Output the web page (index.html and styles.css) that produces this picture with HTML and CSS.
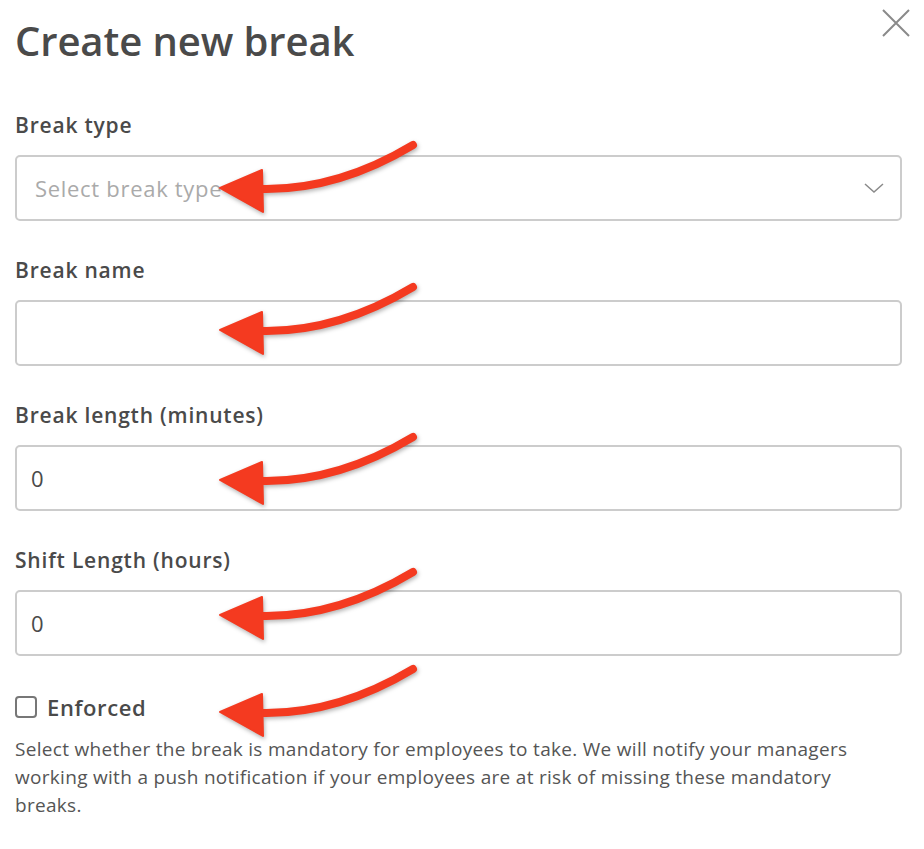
FILE: index.html
```html
<!DOCTYPE html>
<html lang="en">
<head>
  <meta charset="UTF-8" />
  <meta name="viewport" content="width=device-width, initial-scale=1" />
  <title>Create new break</title>
  <link rel="stylesheet" href="styles.css">
</head>
<body>

  <div class="modal">
    <div class="modal-header">
      <h1>Create new break</h1>
      <button class="close-btn" type="button" aria-label="Close">
        <svg width="28" height="28" viewBox="0 0 28 28">
          <path d="M1 1 L27 27 M27 1 L1 27" stroke="#8a8a8a" stroke-width="2" fill="none" />
        </svg>
      </button>
    </div>

    <form class="break-form">
      <div class="field">
        <label class="field-label">Break type</label>
        <div class="select-box">
          <span class="placeholder">Select break type</span>
          <svg width="20" height="10" viewBox="0 0 20 10">
            <path d="M1 1 L10 9 L19 1" stroke="#8a8a8a" stroke-width="1.5" fill="none" />
          </svg>
        </div>
      </div>

      <div class="field">
        <label class="field-label" for="breakName">Break name</label>
        <input class="text-input" id="breakName" type="text" value="" />
      </div>

      <div class="field">
        <label class="field-label" for="breakLength">Break length (minutes)</label>
        <input class="text-input" id="breakLength" type="text" value="0" />
      </div>

      <div class="field">
        <label class="field-label" for="shiftLength">Shift Length (hours)</label>
        <input class="text-input" id="shiftLength" type="text" value="0" />
      </div>

      <label class="check-row">
        <input type="checkbox" class="checkbox" />
        <span>Enforced</span>
      </label>
      <p class="help-text">Select whether the break is mandatory for employees to take. We will notify your managers working with a push notification if your employees are at risk of missing these mandatory breaks.</p>
    </form>
  </div>

  <!-- annotation arrows drawn over the form -->
  <svg class="arrows" width="924" height="849" viewBox="0 0 924 849">
    <defs>
      <g id="arrow">
        <path d="M197 6 Q122 51 47 50" stroke="#f43a20" stroke-width="8" stroke-linecap="round" fill="none" />
        <path d="M4 49 L46 31 L47 73 Z" fill="#f43a20" stroke="#f43a20" stroke-width="2" stroke-linejoin="round" />
      </g>
    </defs>
    <use href="#arrow" x="216" y="139" />
    <use href="#arrow" x="216" y="281" />
    <use href="#arrow" x="216" y="431" />
    <use href="#arrow" x="216" y="566" />
    <use href="#arrow" x="216" y="663" />
  </svg>

</body>
</html>
```

FILE: styles.css
```css
html, body {
  margin: 0;
  padding: 0;
  background: #fff;
  font-family: 'Open Sans', 'Lato', sans-serif;
  color: #4a4a4a;
}

.modal {
  position: relative;
  width: 924px;
}

.modal-header {
  display: flex;
  justify-content: space-between;
  align-items: flex-start;
  padding: 9px 14px 0 15px;
}

.modal-header h1 {
  margin: 8px 0 0 0;
  font-size: 40px;
  line-height: 48px;
  font-weight: 600;
  letter-spacing: -0.1px;
  color: #4a4a4a;
}

.close-btn {
  border: none;
  background: none;
  padding: 0;
  width: 28px;
  height: 28px;
  cursor: pointer;
}

.close-btn svg {
  display: block;
}

.break-form {
  display: flex;
  flex-direction: column;
  padding: 48px 22px 0 15px;
}

.field {
  display: flex;
  flex-direction: column;
  gap: 18px;
  margin-bottom: 37px;
}

.field-label {
  font-size: 21px;
  line-height: 24px;
  font-weight: 600;
  letter-spacing: 0.8px;
}

/* Select finto */
.select-box {
  display: flex;
  align-items: center;
  justify-content: space-between;
  height: 66px;
  box-sizing: border-box;
  border: 2px solid #cccccc;
  border-radius: 5px;
  padding: 0 16px 0 18px;
  cursor: pointer;
}

.placeholder {
  font-size: 22px;
  letter-spacing: 0.7px;
  color: #aaaaaa;
}

.text-input {
  height: 66px;
  box-sizing: border-box;
  border: 2px solid #cccccc;
  border-radius: 5px;
  padding: 0 14px;
  font-family: inherit;
  font-size: 22px;
  color: #4a4a4a;
  outline: none;
}

.check-row {
  display: flex;
  align-items: center;
  gap: 10px;
  margin-top: -1px;
  font-size: 22px;
  font-weight: 600;
  letter-spacing: 0.6px;
  cursor: pointer;
}

.checkbox {
  appearance: none;
  margin: 0;
  width: 22px;
  height: 22px;
  border: 2px solid #777;
  border-radius: 4px;
  background: #fff;
}

.help-text {
  margin: 13px 0 0 0;
  font-size: 19px;
  line-height: 28px;
  letter-spacing: 0.3px;
  color: #555;
}

/* Frecce di annotazione */
.arrows {
  position: absolute;
  top: 0;
  left: 0;
  pointer-events: none;
  filter: drop-shadow(1px 2px 2px rgba(0, 0, 0, 0.3));
}
```
